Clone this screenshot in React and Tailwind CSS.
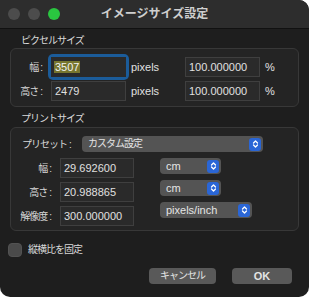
const font = "font-['Liberation_Sans','Noto_Sans_CJK_JP',sans-serif]";
const jp = "text-[10px] tracking-[-1px]";

function Stepper() {
  return (
    <span className="flex h-[13px] w-[12px] items-center justify-center rounded-[3px] bg-[#2a66d6]">
      <svg width="7" height="10" viewBox="0 0 7 10" fill="none" stroke="#fff" strokeWidth="1.3" strokeLinecap="round" strokeLinejoin="round">
        <path d="M1.5 4 3.5 2 5.5 4" />
        <path d="M1.5 6 3.5 8 5.5 6" />
      </svg>
    </span>
  );
}

function Popup({ label, width, isJp }) {
  return (
    <div className={`flex h-[16px] items-center justify-between rounded-[4px] bg-[#545454] pl-[6px] pr-[2px] ${width}`}>
      <span className={`${isJp ? jp : "text-[11px]"} leading-none text-[#e4e4e4]`}>{label}</span>
      <Stepper />
    </div>
  );
}

function Field({ value, width = "w-[75px]" }) {
  return (
    <div className={`flex h-[20px] items-center border border-[#3f3f3f] bg-[#2a2a2a] pl-[3px] text-[11px] text-[#e0e0e0] ${width}`}>
      {value}
    </div>
  );
}

function Label({ text, width }) {
  return (
    <span className={`text-right text-[#d8d8d8] ${jp} ${width}`}>
      {text}
      <span className="ml-[2px] tracking-normal">:</span>
    </span>
  );
}

export default function App() {
  return (
    <div className={`h-[297px] w-[309px] bg-white ${font}`}>
      <div className="flex h-full flex-col overflow-hidden rounded-tr-[10px] rounded-b-[10px] bg-[#1e1e1e]">
        {/* title bar */}
        <div className="grid h-[29px] shrink-0 grid-cols-[1fr_auto_1fr] items-center border-b border-[#111] bg-[#2d2d2d]">
          <div className="flex gap-[8px] pl-[8px]">
            <span className="h-[12px] w-[12px] rounded-full bg-[#4c4c4c]" />
            <span className="h-[12px] w-[12px] rounded-full bg-[#4c4c4c]" />
            <span className="h-[12px] w-[12px] rounded-full bg-[#2ac640]" />
          </div>
          <div className="text-[12px] font-bold text-[#cfcfcf]">イメージサイズ設定</div>
          <div />
        </div>

        <div className="flex flex-col px-[10px]">
          <div className={`mt-[5px] h-[14px] pl-[11px] leading-[14px] text-[#dadada] ${jp}`}>ピクセルサイズ</div>
          <div className="rounded-[6px] border border-[#383838] bg-[#242424] pb-[5px] pt-[8px]">
            <div className="flex items-center">
              <Label text="幅" width="w-[32px]" />
              <div className="ml-[8px] rounded-[2px] ring-[3px] ring-[#1b5c9a]">
                <div className="flex h-[20px] w-[75px] items-center bg-[#2a2a2a] pl-[3px] text-[11px]">
                  <span className="bg-[#77762f] px-[1px] leading-[12px] text-[#f2f2f2]">3507</span>
                </div>
              </div>
              <span className="w-[59px] pl-[5px] text-[11px] text-[#e0e0e0]">pixels</span>
              <Field value="100.000000" />
              <span className="pl-[5px] text-[11px] text-[#e0e0e0]">%</span>
            </div>
            <div className="mt-[4px] flex items-center">
              <Label text="高さ" width="w-[32px]" />
              <div className="ml-[8px]">
                <Field value="2479" />
              </div>
              <span className="w-[59px] pl-[5px] text-[11px] text-[#e0e0e0]">pixels</span>
              <Field value="100.000000" />
              <span className="pl-[5px] text-[11px] text-[#e0e0e0]">%</span>
            </div>
          </div>

          <div className={`mt-[5px] h-[14px] pl-[11px] leading-[14px] text-[#dadada] ${jp}`}>プリントサイズ</div>
          <div className="mt-[1px] rounded-[6px] border border-[#383838] bg-[#242424] pb-[4px] pt-[8px]">
            <div className="flex items-center">
              <span className={`w-[71px] pl-[11px] text-[#d8d8d8] ${jp}`}>
                プリセット<span className="ml-[2px] tracking-normal">:</span>
              </span>
              <Popup label="カスタム設定" width="w-[181px]" isJp />
            </div>
            <div className="mt-[6px] flex">
              <div className="flex flex-col gap-[4px]">
                {[
                  ["幅", "29.692600"],
                  ["高さ", "20.988865"],
                  ["解像度", "300.000000"],
                ].map(([l, v]) => (
                  <div key={l} className="flex items-center">
                    <Label text={l} width="w-[41px]" />
                    <div className="ml-[8px]">
                      <Field value={v} width="w-[74px]" />
                    </div>
                  </div>
                ))}
              </div>
              <div className="ml-[26px] flex flex-col gap-[6px]">
                <Popup label="cm" width="w-[61px]" />
                <Popup label="cm" width="w-[61px]" />
                <Popup label="pixels/inch" width="w-[92px]" />
              </div>
            </div>
          </div>

          <div className="-ml-[2px] mt-[11px] flex items-center">
            <span className="h-[14px] w-[14px] rounded-[4px] border border-[#525252] bg-[#4a4a4a]" />
            <span className={`ml-[6px] text-[#d8d8d8] ${jp}`}>縦横比を固定</span>
          </div>

          <div className="mr-[7px] mt-[11px] flex justify-end gap-[16px]">
            <button className={`h-[16px] w-[67px] rounded-[4px] bg-[#595959] leading-none text-[#e4e4e4] ${jp}`}>キャンセル</button>
            <button className="h-[16px] w-[60px] rounded-[4px] bg-[#595959] text-[11px] font-semibold leading-none text-[#e4e4e4]">OK</button>
          </div>
        </div>
      </div>
    </div>
  );
}
